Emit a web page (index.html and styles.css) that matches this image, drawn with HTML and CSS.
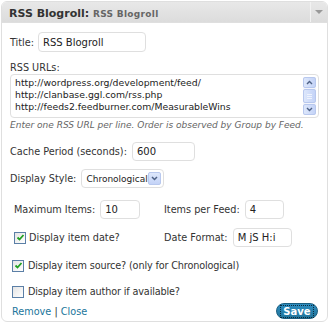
FILE: index.html
```html
<html>
    <head>
        <title>RSS Blogroll</title>
        <link rel="stylesheet" href="styles.css">
    </head>
    <body>
        <div class="widget">
            <div class="widget-top">
                <div class="widget-title">RSS Blogroll: <span class="in-title">RSS Blogroll</span></div>
                <div class="widget-handle"><span class="arrow"></span></div>
            </div>
            <div class="widget-inside">
                <div class="row r-title">
                    <span class="lbl">Title:</span>
                    <span class="field w-title">RSS Blogroll</span>
                </div>
                <div class="lbl-block">RSS URLs:</div>
                <div class="urls">
                    <div class="urls-text">http://wordpress.org/development/feed/<br/>http://clanbase.ggl.com/rss.php<br/>http://feeds2.feedburner.com/MeasurableWins</div>
                    <div class="scroll">
                        <span class="sbtn"><svg width="7" height="5" viewBox="0 0 7 5"><path d="M1 4 L3.5 1.5 L6 4" fill="none" stroke="#4d6185" stroke-width="1.4"/></svg></span>
                        <span class="sthumb"><i></i><i></i><i></i></span>
                        <span class="sbtn"><svg width="7" height="5" viewBox="0 0 7 5"><path d="M1 1 L3.5 3.5 L6 1" fill="none" stroke="#4d6185" stroke-width="1.4"/></svg></span>
                    </div>
                </div>
                <div class="help">Enter one RSS URL per line. Order is observed by Group by Feed.</div>
                <div class="row r-cache">
                    <span class="lbl">Cache Period (seconds):</span>
                    <span class="field w-cache">600</span>
                </div>
                <div class="row r-style">
                    <span class="lbl">Display Style:</span>
                    <span class="select">
                        <span class="select-val">Chronological</span>
                        <span class="select-btn"><svg width="7" height="5" viewBox="0 0 7 5"><path d="M1 1 L3.5 3.5 L6 1" fill="none" stroke="#4d6185" stroke-width="1.5"/></svg></span>
                    </span>
                </div>
                <div class="cols r-max">
                    <div class="row">
                        <span class="lbl">Maximum Items:</span>
                        <span class="field w-max">10</span>
                    </div>
                    <div class="row">
                        <span class="lbl">Items per Feed:</span>
                        <span class="field w-per">4</span>
                    </div>
                </div>
                <div class="cols r-date">
                    <div class="row">
                        <span class="check on"><svg width="9" height="9" viewBox="0 0 9 9"><path d="M1.5 4.5 L3.5 6.5 L7.5 2" fill="none" stroke="#21a121" stroke-width="1.8"/></svg></span>
                        <span class="lbl">Display item date?</span>
                    </div>
                    <div class="row">
                        <span class="lbl">Date Format:</span>
                        <span class="field w-date">M jS H:i</span>
                    </div>
                </div>
                <div class="row r-check r-source">
                    <span class="check on"><svg width="9" height="9" viewBox="0 0 9 9"><path d="M1.5 4.5 L3.5 6.5 L7.5 2" fill="none" stroke="#21a121" stroke-width="1.8"/></svg></span>
                    <span class="lbl">Display item source? (only for Chronological)</span>
                </div>
                <div class="row r-check r-author">
                    <span class="check"></span>
                    <span class="lbl">Display item author if available?</span>
                </div>
                <div class="control-actions">
                    <div class="links"><a href="#remove">Remove</a> | <a href="#close">Close</a></div>
                    <span class="button-primary"><span class="focus">Save</span></span>
                </div>
            </div>
        </div>
    </body>
</html>
```

FILE: styles.css
```css
body {
    margin: 0;
    background: #ffffff;
    font-family: "DejaVu Sans", Verdana, sans-serif;
    font-size: 9.7px;
    color: #333333;
}
.widget {
    margin: 1px 0 0 1px;
    width: 327px;
    height: 321px;
    border: 1px solid #dfdfdf;
    border-radius: 6px;
    box-sizing: border-box;
    overflow: hidden;
}
.widget-top {
    display: flex;
    height: 20px;
    background: linear-gradient(#e8e8e8, #dcdcdc);
    border-bottom: 1px solid #dfdfdf;
}
.widget-title {
    flex: 1;
    padding: 5px 0 0 7px;
    font-size: 11px;
    font-weight: bold;
    color: #333333;
}
.in-title {
    font-size: 9px;
    color: #666666;
    letter-spacing: 0.3px;
}
.widget-handle {
    width: 16px;
    border-left: 1px solid #f2f2f2;
    display: flex;
    align-items: center;
    justify-content: center;
}
.arrow {
    width: 0;
    height: 0;
    border-left: 4px solid transparent;
    border-right: 4px solid transparent;
    border-top: 4px solid #999999;
}
.widget-inside {
    padding: 9px 8px 0 8px;
}
.row {
    display: flex;
    align-items: center;
    height: 19px;
}
.lbl {
    white-space: nowrap;
}
.field {
    display: flex;
    align-items: center;
    height: 19px;
    box-sizing: border-box;
    border: 1px solid #dfdfdf;
    border-radius: 4px;
    padding: 0 4px;
    margin-left: 5px;
    background: #ffffff;
    color: #222222;
    font-size: 10px;
}
.r-title {
    height: 20px;
}
.r-title .field {
    height: 20px;
    margin-left: 4px;
}
.w-title { width: 108px; }
.w-cache { width: 63px; }
.w-max { width: 40px; }
.w-per { width: 39px; }
.w-date { width: 59px; }
.lbl-block {
    margin-top: 9px;
    line-height: 13px;
}
.urls {
    display: flex;
    height: 44px;
    box-sizing: border-box;
    border: 1px solid #dfdfdf;
    border-radius: 4px;
    padding: 2px 2px 2px 4px;
}
.urls-text {
    flex: 1;
    font-size: 9.3px;
    line-height: 12px;
    color: #222222;
    white-space: nowrap;
    overflow: hidden;
}
.scroll {
    width: 13px;
    display: flex;
    flex-direction: column;
    gap: 1px;
    background: #f3f5fb;
}
.sbtn, .sthumb {
    display: flex;
    align-items: center;
    justify-content: center;
    border: 1px solid #b8c8ee;
    border-radius: 2px;
    background: linear-gradient(90deg, #dde7fb, #c4d3f7);
    height: 11px;
    box-sizing: border-box;
}
.sthumb {
    flex: 1;
    flex-direction: column;
    gap: 1px;
}
.sthumb i {
    display: block;
    width: 5px;
    height: 1px;
    background: #eef3fd;
}
.help {
    margin-top: 1px;
    line-height: 13px;
    font-size: 9px;
    font-style: italic;
    color: #666666;
    white-space: nowrap;
}
.r-cache {
    margin-top: 10px;
}
.r-style {
    margin-top: 8px;
}
.select {
    display: flex;
    align-items: center;
    width: 83px;
    height: 19px;
    box-sizing: border-box;
    border: 1px solid #dfdfdf;
    border-radius: 4px;
    margin-left: 5px;
    padding: 0 2px 0 4px;
}
.select-val {
    flex: 1;
    font-size: 9px;
    color: #222222;
    white-space: nowrap;
}
.select-btn {
    display: flex;
    align-items: center;
    justify-content: center;
    width: 13px;
    height: 13px;
    box-sizing: border-box;
    border: 1px solid #b8c8ee;
    border-radius: 2px;
    background: linear-gradient(#dde7fb, #c4d3f7);
}
.cols {
    display: grid;
    grid-template-columns: 150px 1fr;
    padding-left: 4px;
}
.r-max {
    margin-top: 12px;
}
.r-date {
    margin-top: 9px;
}
.check {
    display: flex;
    align-items: center;
    justify-content: center;
    width: 12px;
    height: 12px;
    box-sizing: border-box;
    border: 1px solid #5b7fa6;
    background: linear-gradient(135deg, #e4e4e4, #ffffff);
    margin-right: 4px;
}
.cols .check {
    margin-right: 3px;
}
.r-check {
    padding-left: 2px;
}
.r-check .lbl {
    letter-spacing: -0.15px;
}
.r-source {
    margin-top: 9px;
}
.r-author {
    margin-top: 7px;
}
.control-actions {
    display: flex;
    align-items: center;
    justify-content: space-between;
    margin-top: 2px;
    height: 16px;
    padding-left: 2px;
}
.links {
    color: #333333;
}
.links a {
    color: #21759b;
    text-decoration: none;
}
.button-primary {
    display: flex;
    align-items: center;
    justify-content: center;
    width: 42px;
    height: 16px;
    box-sizing: border-box;
    border: 1px solid #1b5f80;
    border-radius: 9px;
    background: linear-gradient(#2e8dc0, #21759b);
    color: #ffffff;
    font-weight: bold;
    font-size: 10px;
    margin-right: 1px;
}
.focus {
    outline: 1px dotted #0b2a3a;
    padding: 0 2px;
    line-height: 11px;
}
```
